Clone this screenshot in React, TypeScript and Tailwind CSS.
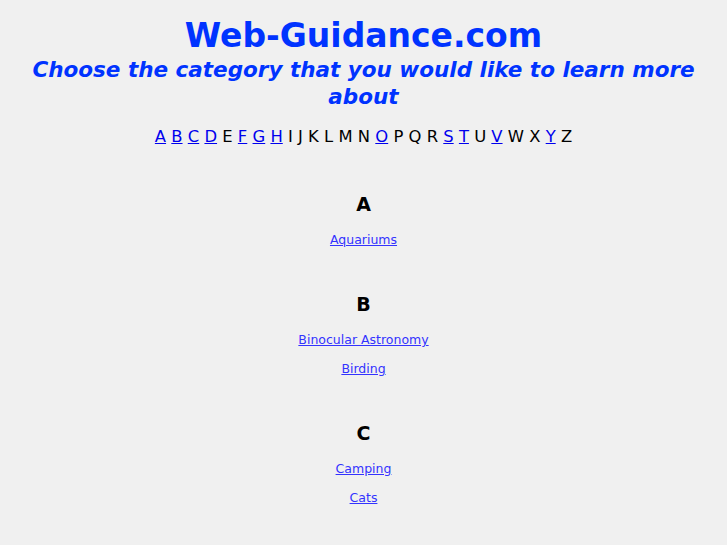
const letters = 'ABCDEFGHIJKLMNOPQRSTUVWXYZ'.split('');
const linked = new Set(['A', 'B', 'C', 'D', 'F', 'G', 'H', 'O', 'S', 'T', 'V', 'Y']);

const sections: { letter: string; links: string[] }[] = [
  { letter: 'A', links: ['Aquariums'] },
  { letter: 'B', links: ['Binocular Astronomy', 'Birding'] },
  { letter: 'C', links: ['Camping', 'Cats'] },
];

export default function App() {
  return (
    <div
      className="min-h-screen bg-[#f0f0f0] text-center text-black"
      style={{ fontFamily: '"DejaVu Sans", Verdana, sans-serif' }}
    >
      <div className="pt-[17px]">
        <h1 className="text-[33px] font-bold leading-[38px] text-[#0033ff]">Web-Guidance.com</h1>
        <h2 className="mx-auto mt-[1px] max-w-[690px] text-[21.5px] font-bold italic leading-[27px] text-[#0033ff]">
          Choose the category that you would like to learn more about
        </h2>
        <p className="mt-[17px] text-[16.4px] leading-[20px]">
          {letters.map((l, i) => (
            <span key={l}>
              {linked.has(l) ? (
                <a href="#" className="text-[#0000ee] underline">
                  {l}
                </a>
              ) : (
                l
              )}
              {i < letters.length - 1 ? ' ' : ''}
            </span>
          ))}
        </p>
      </div>

      <div className="mt-[46px] flex flex-col">
        {sections.map((s) => (
          <div key={s.letter} className="mb-[45px] flex flex-col items-center">
            <h3 className="text-[19px] font-bold leading-[22px]">{s.letter}</h3>
            <div className="mt-[17px] flex flex-col items-center gap-[13px]">
              {s.links.map((link) => (
                <a key={link} href="#" className="text-[12.5px] leading-[16px] text-[#3333ff] underline">
                  {link}
                </a>
              ))}
            </div>
          </div>
        ))}
      </div>
    </div>
  );
}
